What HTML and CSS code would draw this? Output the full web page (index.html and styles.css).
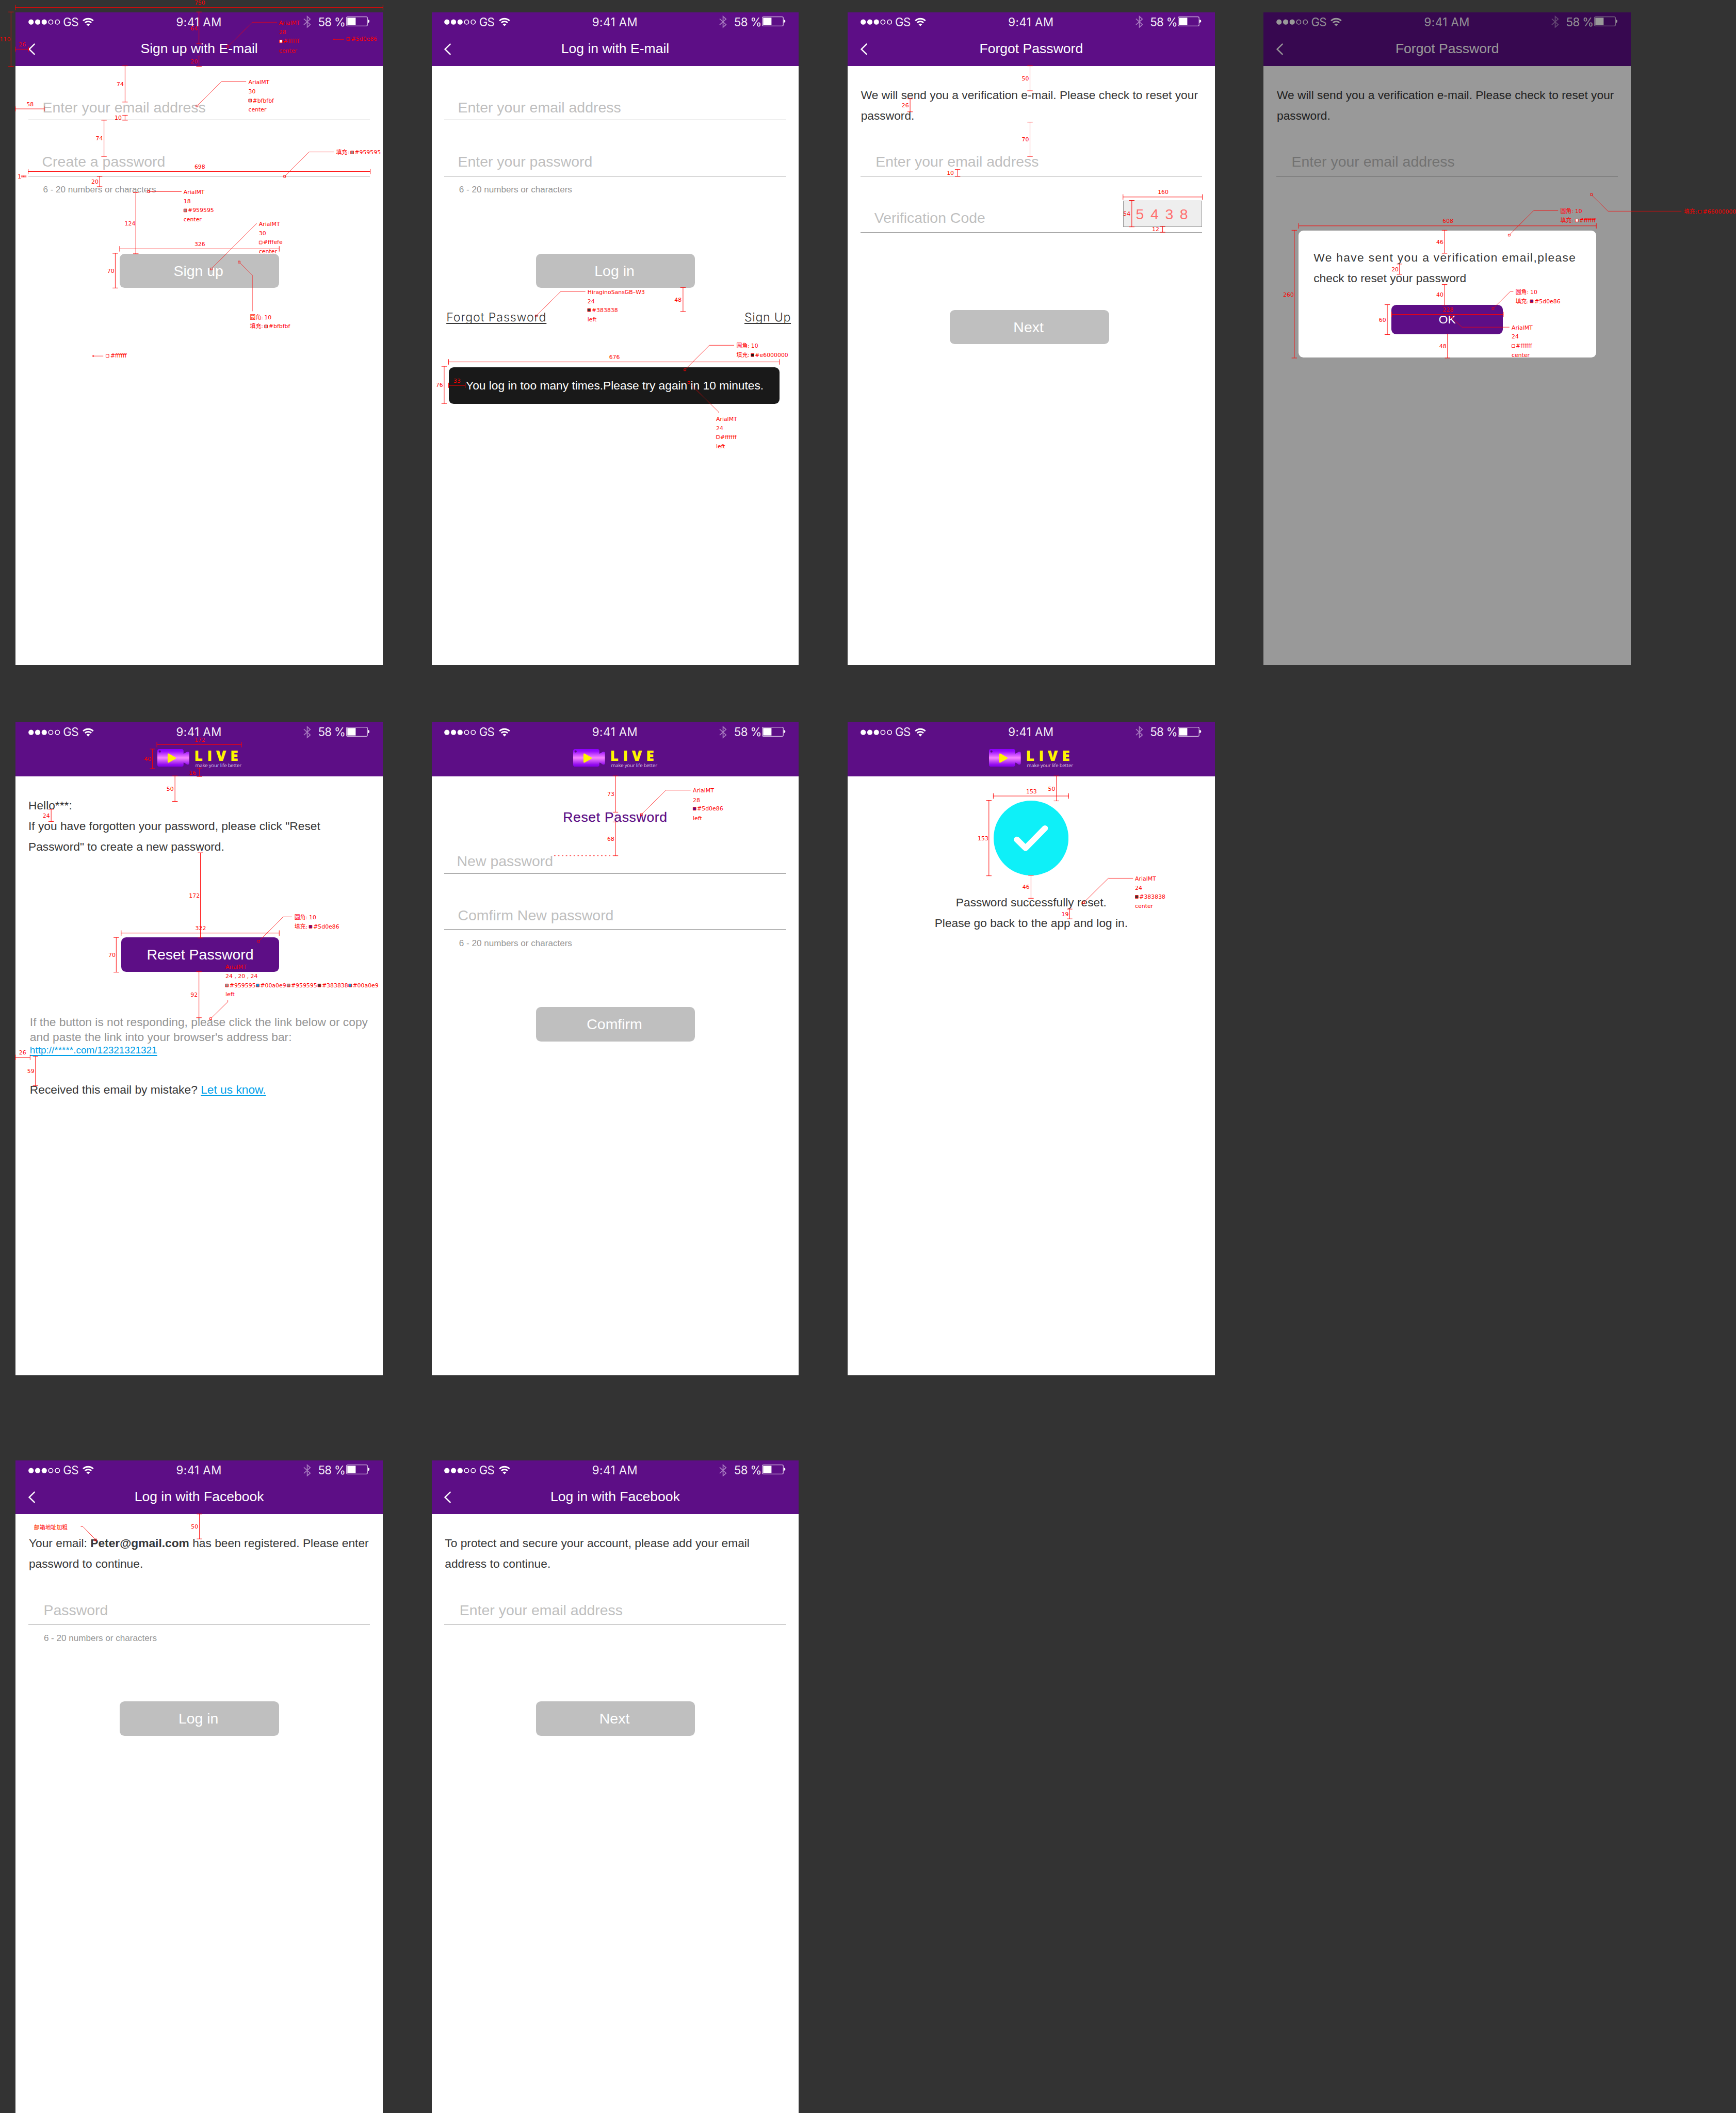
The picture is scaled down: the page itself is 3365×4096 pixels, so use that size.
FILE: index.html
```html
<!DOCTYPE html>
<html lang="en">
<head>
<meta charset="utf-8">
<title>Account screens</title>
<link rel="stylesheet" href="styles.css">
</head>
<body>
<svg class="sprite" aria-hidden="true">
  <symbol id="dots" viewBox="0 0 65 12"><g fill="#fff"><circle cx="5.5" cy="6" r="5.4"/><circle cx="19" cy="6" r="5.4"/><circle cx="32.4" cy="6" r="5.4"/></g><g fill="none" stroke="#fff" stroke-width="1.7"><circle cx="45.8" cy="6" r="4.4"/><circle cx="59.3" cy="6" r="4.4"/></g></symbol>
  <symbol id="wifi" viewBox="0 0 23 18"><path d="M1.2 6.6A14.6 14.6 0 0 1 21.8 6.6M5 10.6A9.2 9.2 0 0 1 18 10.6" fill="none" stroke="#fff" stroke-width="3"/><path d="M11.5 17.8L7.8 13.8A5.4 5.4 0 0 1 15.2 13.8Z" fill="#fff"/></symbol>
  <symbol id="bt" viewBox="0 0 16 26"><path d="M1 6.8L14 18.6L8 24V2L14 7.4L1 19.2" fill="none" stroke="#a679be" stroke-width="1.9"/></symbol>
  <symbol id="battery" viewBox="0 0 48 20"><rect x=".7" y=".7" width="42.8" height="18.6" rx="2.4" fill="none" stroke="#d9c6e4" stroke-width="1.3"/><rect x="2.4" y="2.4" width="17" height="15.2" fill="#fff"/><path d="M44.4 6.4Q48 7 48 9.6Q48 12 44.4 12.8Z" fill="#fff"/></symbol>
  <symbol id="back" viewBox="0 0 14 24"><path d="M13 1L1.8 12L13 23" fill="none" stroke="#fff" stroke-width="2.6"/></symbol>
  <linearGradient id="cam" x1="0" y1="0" x2="0" y2="36" gradientUnits="userSpaceOnUse"><stop offset="0" stop-color="#8c00ff"/><stop offset=".12" stop-color="#9608ff"/><stop offset=".5" stop-color="#f985ff"/><stop offset=".9" stop-color="#8f08ee"/><stop offset="1" stop-color="#8600ea"/></linearGradient>
  <symbol id="camera" viewBox="0 0 66 36"><path d="M4 0H49.5Q53.5 0 53.5 4V9.6Q56 9 58.5 7Q60.500 5.600 62.500 5.600Q65 5.600 65 9V28Q65 32 62.500 32Q60.500 32 58.500 30.300Q56 28 53.500 27.600V32Q53.500 36 49.500 36H4Q0 36 0 32V4Q0 0 4 0Z" fill="url(#cam)"/><circle cx="5" cy="5" r="2.2" fill="#5a0e80"/><path d="M21 10.500Q21.300 8.400 23.500 9.300L37.200 17.200Q39 18.600 37.200 20L23.500 27.800Q21.300 28.800 21 26.500Z" fill="#fff500"/></symbol>
</svg>

<main class="board">
  <div class="row">
    <section class="screen">
      <header class="bar">
        <div class="status"><div class="carrier"><svg class="i-dots"><use href="#dots"/></svg><span>GS</span><svg class="i-wifi"><use href="#wifi"/></svg></div><span class="time">9:41 AM</span><div class="power"><svg class="i-bt"><use href="#bt"/></svg><span>58 %</span><svg class="i-bat"><use href="#battery"/></svg></div></div>
        <div class="nav"><svg class="i-back"><use href="#back"/></svg><h1>Sign up with E-mail</h1></div>
      </header>
      <div class="content signup">
        <div class="field field--tight">Enter your email address</div>
        <div class="field field--create">Create a password</div>
        <p class="hint">6 - 20 numbers or characters</p>
        <div class="btn">Sign up</div>
      </div>
    </section>

    <section class="screen">
      <header class="bar">
        <div class="status"><div class="carrier"><svg class="i-dots"><use href="#dots"/></svg><span>GS</span><svg class="i-wifi"><use href="#wifi"/></svg></div><span class="time">9:41 AM</span><div class="power"><svg class="i-bt"><use href="#bt"/></svg><span>58 %</span><svg class="i-bat"><use href="#battery"/></svg></div></div>
        <div class="nav"><svg class="i-back"><use href="#back"/></svg><h1>Log in with E-mail</h1></div>
      </header>
      <div class="content login">
        <div class="field field--tight">Enter your email address</div>
        <div class="field field--pass">Enter your password</div>
        <p class="hint">6 - 20 numbers or characters</p>
        <div class="btn">Log in</div>
        <div class="links"><span class="forgot">Forgot Password</span><span class="join">Sign Up</span></div>
        <div class="toast">You log in too many times.Please try again in 10 minutes.</div>
      </div>
    </section>

    <section class="screen">
      <header class="bar">
        <div class="status"><div class="carrier"><svg class="i-dots"><use href="#dots"/></svg><span>GS</span><svg class="i-wifi"><use href="#wifi"/></svg></div><span class="time">9:41 AM</span><div class="power"><svg class="i-bt"><use href="#bt"/></svg><span>58 %</span><svg class="i-bat"><use href="#battery"/></svg></div></div>
        <div class="nav"><svg class="i-back"><use href="#back"/></svg><h1>Forgot Password</h1></div>
      </header>
      <div class="content forgot-screen">
        <p class="text">We will send you a verification e-mail. Please check to reset your<br>password.</p>
        <div class="field field--mail">Enter your email address</div>
        <div class="field field--code"><span>Verification Code</span><span class="captcha">5 4 3 8</span></div>
        <div class="btn">Next</div>
      </div>
    </section>

    <section class="screen">
      <header class="bar">
        <div class="status"><div class="carrier"><svg class="i-dots"><use href="#dots"/></svg><span>GS</span><svg class="i-wifi"><use href="#wifi"/></svg></div><span class="time">9:41 AM</span><div class="power"><svg class="i-bt"><use href="#bt"/></svg><span>58 %</span><svg class="i-bat"><use href="#battery"/></svg></div></div>
        <div class="nav"><svg class="i-back"><use href="#back"/></svg><h1>Forgot Password</h1></div>
      </header>
      <div class="content">
        <p class="text">We will send you a verification e-mail. Please check to reset your<br>password.</p>
        <div class="field field--mail">Enter your email address</div>
      </div>
      <div class="dim">
        <div class="modal">
          <p class="modal-text"><span class="wide">We have sent you a verification email,please</span><br>check to reset your password</p>
          <div class="ok">OK</div>
        </div>
      </div>
    </section>
  </div>

  <div class="row">
    <section class="screen">
      <header class="bar">
        <div class="status"><div class="carrier"><svg class="i-dots"><use href="#dots"/></svg><span>GS</span><svg class="i-wifi"><use href="#wifi"/></svg></div><span class="time">9:41 AM</span><div class="power"><svg class="i-bt"><use href="#bt"/></svg><span>58 %</span><svg class="i-bat"><use href="#battery"/></svg></div></div>
        <svg class="logo" viewBox="0 0 174 40"><use href="#camera" width="66" height="36" y="1"/><text class="logo-name" x="75.500 101.800 119.800 149" y="25.500">LIVE</text><text class="logo-tag" x="77.500" y="37.500" textLength="94.500">make your life better</text></svg>
      </header>
      <div class="content mail">
        <p class="text">Hello***:<br>If you have forgotten your password, please click "Reset<br>Password" to create a new password.</p>
        <div class="btn btn--purple">Reset Password</div>
        <p class="note">If the button is not responding, please click the link below or copy<br>and paste the link into your browser's address bar:</p>
        <p class="url"><span>http://*****.com/12321321321</span></p>
        <p class="mistake">Received this email by mistake? <span>Let us know.</span></p>
      </div>
    </section>

    <section class="screen">
      <header class="bar">
        <div class="status"><div class="carrier"><svg class="i-dots"><use href="#dots"/></svg><span>GS</span><svg class="i-wifi"><use href="#wifi"/></svg></div><span class="time">9:41 AM</span><div class="power"><svg class="i-bt"><use href="#bt"/></svg><span>58 %</span><svg class="i-bat"><use href="#battery"/></svg></div></div>
        <svg class="logo" viewBox="0 0 174 40"><use href="#camera" width="66" height="36" y="1"/><text class="logo-name" x="75.500 101.800 119.800 149" y="25.500">LIVE</text><text class="logo-tag" x="77.500" y="37.500" textLength="94.500">make your life better</text></svg>
      </header>
      <div class="content reset">
        <h2>Reset Password</h2>
        <div class="field field--tight">New password</div>
        <div class="field field--again">Comfirm New password</div>
        <p class="hint">6 - 20 numbers or characters</p>
        <div class="btn">Comfirm</div>
      </div>
    </section>

    <section class="screen">
      <header class="bar">
        <div class="status"><div class="carrier"><svg class="i-dots"><use href="#dots"/></svg><span>GS</span><svg class="i-wifi"><use href="#wifi"/></svg></div><span class="time">9:41 AM</span><div class="power"><svg class="i-bt"><use href="#bt"/></svg><span>58 %</span><svg class="i-bat"><use href="#battery"/></svg></div></div>
        <svg class="logo" viewBox="0 0 174 40"><use href="#camera" width="66" height="36" y="1"/><text class="logo-name" x="75.500 101.800 119.800 149" y="25.500">LIVE</text><text class="logo-tag" x="77.500" y="37.500" textLength="94.500">make your life better</text></svg>
      </header>
      <div class="content success">
        <svg class="tick" viewBox="0 0 153 153"><circle cx="76.500" cy="76.500" r="76.500" fill="#0ef0f8"/><path d="M47.400 79.500L65.200 97L105 56.500" fill="none" stroke="#fff" stroke-width="12" stroke-linecap="round" stroke-linejoin="round"/></svg>
        <p class="text">Password successfully reset.<br>Please go back to the app and log in.</p>
      </div>
    </section>
  </div>

  <div class="row">
    <section class="screen">
      <header class="bar">
        <div class="status"><div class="carrier"><svg class="i-dots"><use href="#dots"/></svg><span>GS</span><svg class="i-wifi"><use href="#wifi"/></svg></div><span class="time">9:41 AM</span><div class="power"><svg class="i-bt"><use href="#bt"/></svg><span>58 %</span><svg class="i-bat"><use href="#battery"/></svg></div></div>
        <div class="nav"><svg class="i-back"><use href="#back"/></svg><h1>Log in with Facebook</h1></div>
      </header>
      <div class="content facebook">
        <p class="text">Your email: <b>Peter@gmail.com</b> has been registered. Please enter<br>password to continue.</p>
        <div class="field field--mail">Password</div>
        <p class="hint">6 - 20 numbers or characters</p>
        <div class="btn">Log in</div>
      </div>
    </section>

    <section class="screen">
      <header class="bar">
        <div class="status"><div class="carrier"><svg class="i-dots"><use href="#dots"/></svg><span>GS</span><svg class="i-wifi"><use href="#wifi"/></svg></div><span class="time">9:41 AM</span><div class="power"><svg class="i-bt"><use href="#bt"/></svg><span>58 %</span><svg class="i-bat"><use href="#battery"/></svg></div></div>
        <div class="nav"><svg class="i-back"><use href="#back"/></svg><h1>Log in with Facebook</h1></div>
      </header>
      <div class="content facebook-mail">
        <p class="text">To protect and secure your account, please add your email<br>address to continue.</p>
        <div class="field field--mail">Enter your email address</div>
        <div class="btn">Next</div>
      </div>
    </section>
  </div>

  <!-- Measurements and style callouts laid over the screens -->
  <svg class="specs" viewBox="0 0 3547 4318">
    <!-- sign up -->
    <path d="M31.500 15.500H782.500M31.500 10V21M782.500 10V21M22.500 24.500V135.500M17 24.500H28M17 135.500H28M31.500 100.500H58.500M31.500 95.500V105.500M58.500 95.500V105.500M406.500 24.500V89.500M401 24.500H412M401 89.500H412M406.500 114.500V135.500M401 114.500H412M401 135.500H412M255.500 134.500V208.500M250 134.500H261M250 208.500H261M31.500 222.500H90.500M31.500 217.500V227.500M90.500 217.500V227.500M255.500 235.500V245.500M250 235.500H261M250 245.500H261M212.500 245.500V319.500M207 245.500H218M207 319.500H218M57.500 350.500H756.500M57.500 345.500V355.500M756.500 345.500V355.500M43 359.500H54M43 361.500H54M48.500 359V362M203.500 360.500V381.500M198 360.500H209M198 381.500H209M277.500 393.500V518.500M272 393.500H283M272 518.500H283M244.500 508.500H570.500M244.500 503V514M570.500 503V514M235.500 517.500V588.500M230 517.500H241M230 588.500H241"/>
    <path class="lead" d="M467.500 93.500L515.500 45.500H566M684 80.500H703M404.500 214.500L452.500 166.500H503M583.500 358.500L631.500 310.500H682M305.500 391.500H371M433.500 547.500L524.500 456.500M490.500 537.500L515.500 562V636M192 727.500H211"/>
    <path class="dot" d="M463.500 93.500h4v4h-4zM681.500 79.500h2v2h-2zM400.500 214.500h4v4h-4zM579.500 358.500h4v4h-4zM301.500 389.500h4v4h-4zM429.500 547.500h4v4h-4zM486.500 533.500h4v4h-4zM189.500 726.500h2v2h-2z"/>
    <g class="chips"><path fill="#fff" d="M571 81.500h6v6h-6zM529.500 492.500h6v6h-6zM216.500 724h6v6h-6z"/><path fill="#5d0e86" d="M708.500 76.500h6v6h-6z"/><path fill="#bfbfbf" d="M508 202.500h6v6h-6zM540.500 664h6v6h-6z"/><path fill="#959595" d="M716.500 308.500h6v6h-6zM375.500 427h6v6h-6z"/></g>
    <text x="397.300" y="9.300">750</text><text x="-.5" y="84.700">110</text><text x="38.200" y="95">26</text><text x="389.300" y="62">64</text><text x="389.300" y="129.700">20</text>
    <text x="570" y="51">ArialMT</text><text x="570" y="69.700">28</text><text x="578.600" y="88">#ffffff</text><text x="570" y="107">center</text><text x="717.300" y="83.300">#5d0e86</text>
    <text x="238.300" y="175.700">74</text><text x="507.500" y="172">ArialMT</text><text x="507.500" y="190.700">30</text><text x="516" y="209.300">#bfbfbf</text><text x="507.500" y="228">center</text>
    <text x="54" y="217">58</text><text x="234" y="244.800">10</text><text x="195.600" y="286.500">74</text><text x="397.300" y="344.800">698</text><text x="686.700" y="315.300">填充:</text><text x="724.500" y="315.300">#959595</text>
    <text x="36" y="364.700">1</text><text x="186.700" y="375.700">20</text><text x="375" y="396.700">ArialMT</text><text x="375" y="415.500">18</text><text x="383.700" y="433.700">#959595</text><text x="375" y="452.700">center</text>
    <text x="254.600" y="461">124</text><text x="529" y="462">ArialMT</text><text x="529" y="480.700">30</text><text x="537.500" y="498.700">#fffefe</text><text x="529" y="518">center</text><text x="397.300" y="503">326</text><text x="219" y="558">70</text>
    <text x="510.700" y="652">圆角:</text><text x="540" y="652">10</text><text x="510.700" y="670.700">填充:</text><text x="549" y="670.700">#bfbfbf</text><text x="225.500" y="731">#ffffff</text>

    <!-- log in -->
    <path d="M1395.500 587.500V636.500M1390 587.500H1401M1390 636.500H1401M916.500 739.500H1592.500M916.500 734V745M1592.500 734V745M907.500 748.500V824.500M902 748.500H913M902 824.500H913M916.500 787.500H950.500M916.500 782V792.500M950.500 782V792.500"/>
    <path class="lead" d="M1097.500 643.500L1146 595.500H1196M1401.500 753.500L1449.500 705.500H1500M1409.500 783.500L1468.500 842V844"/>
    <path class="dot" d="M1093.500 643.500h4v4h-4zM1397.500 753.500h4v4h-4zM1405.500 779.500h4v4h-4z"/>
    <g class="chips"><path fill="#383838" d="M1200.500 630.500h6v6h-6z"/><path fill="#191919" d="M1534.500 722.500h6v6h-6z"/><path fill="#fff" d="M1463.500 890h6v6h-6z"/></g>
    <text x="1200.300" y="600.700">HiraginoSansGB–W3</text><text x="1200.300" y="619.300">24</text><text x="1209" y="637.300">#383838</text><text x="1200.300" y="656.700">left</text><text x="1378" y="616.700">48</text>
    <text x="1504.700" y="710.700">圆角:</text><text x="1534.500" y="710.700">10</text><text x="1504.700" y="729.700">填充:</text><text x="1542.500" y="729.700">#e6000000</text><text x="1244.500" y="734">676</text><text x="890.400" y="790.700">76</text><text x="926.500" y="782">33</text>
    <text x="1463" y="860">ArialMT</text><text x="1463" y="878.700">24</text><text x="1471.500" y="896.700">#ffffff</text><text x="1463" y="915.700">left</text>

    <!-- forgot password -->
    <path d="M2104.500 134.500V185.500M2099 134.500H2110M2099 185.500H2110M1859.500 202V228.500M1854 202H1865M1854 228.500H1865M2104.500 249.500V319.500M2099 249.500H2110M2099 319.500H2110M1956.500 346.500V360.500M1951 346.500H1962M1951 360.500H1962M2294.500 402.500H2456.500M2294.500 397V408M2456.500 397V408M2312.500 409.500V463.500M2307 409.500H2318M2307 463.500H2318M2375.500 462.500V474.500M2370 462.500H2381M2370 474.500H2381"/>
    <text x="2087.600" y="164.400">50</text><text x="1842.400" y="219.500">26</text><text x="2087.600" y="288.400">70</text><text x="1934.400" y="357.700">10</text><text x="2365.500" y="396.700">160</text><text x="2295" y="440.400">54</text><text x="2353.700" y="472.500">12</text>

    <!-- verification dialog -->
    <path d="M2653.500 461.500H3261.500M2653.500 456V467M3261.500 456V467M2644.500 470.500V731M2639 470.500H2650M2639 731.500H2650M2951.500 470.500V517.500M2946 470.500H2957M2946 517.500H2957M2859.500 539.500V560.500M2854 539.500H2865M2854 560.500H2865M2951.500 581.500V623.500M2946 581.500H2957M2946 623.500H2957M2843.500 642.500H3071.500M2843.500 637V648M3071.500 637V648M2834.500 622.500V683.500M2829 622.500H2840M2829 683.500H2840M2957.500 682.500V731.500M2952 682.500H2963M2952 731.500H2963"/>
    <path class="lead" d="M3253 399.500L3285.500 431.500H3435.500M3085.500 478.500L3133.500 430.500H3183.500M3052.500 628.500L3086 595.500H3092M2967.500 650L2987 668.500H3084"/>
    <path class="dot" d="M3249.500 395.500h4v4h-4zM3081.500 478.500h4v4h-4zM3048.500 628.500h4v4h-4zM2963.500 646h4v4h-4z"/>
    <g class="chips"><path fill="#242424" d="M3470.500 429.500h6v6h-6z"/><path fill="#fff" d="M3218.500 447.500h6v6h-6zM3089 704h6v6h-6z"/><path fill="#5d0e86" d="M3126.500 612.500h6v6h-6z"/></g>
    <text x="3440.400" y="436.200">填充:</text><text x="3479" y="436.200">#66000000</text><text x="3188" y="435.300">圆角:</text><text x="3218" y="435.300">10</text><text x="3188" y="454.200">填充:</text><text x="3226.500" y="454.200">#ffffff</text>
    <text x="2947.500" y="455.600">608</text><text x="2621.500" y="605.900">260</text><text x="2934.500" y="498.700">46</text><text x="2843" y="554.500">20</text><text x="2934.500" y="606.400">40</text><text x="2947.500" y="636.400">228</text><text x="2817.400" y="657.700">60</text><text x="2940.700" y="711.500">48</text>
    <text x="3096.500" y="600.500">圆角:</text><text x="3126.500" y="600.500">10</text><text x="3096.500" y="619.400">填充:</text><text x="3135" y="619.400">#5d0e86</text>
    <text x="3088.400" y="673.700">ArialMT</text><text x="3088.400" y="692">24</text><text x="3097" y="710.500">#ffffff</text><text x="3088.400" y="729.500">center</text>

    <!-- reset e-mail -->
    <path d="M320.500 1521.500H493.500M320.500 1516V1527M493.500 1516V1527M311.500 1530.500V1570.500M306 1530.500H317M306 1570.500H317M407.500 1569.500V1586.500M402 1569.500H413M402 1586.500H413M357.500 1585.500V1637.500M352 1585.500H363M352 1637.500H363M104.500 1653.500V1678.500M99 1653.500H110M99 1678.500H110M409.500 1742.500V1916.500M404 1742.500H415M404 1916.500H415M247.500 1906.500H570.500M247.500 1901V1912M570.500 1901V1912M237.500 1915.500V1986.500M232 1915.500H243M232 1986.500H243M406.500 1985.500V2079.500M401 1985.500H412M401 2079.500H412M31.500 2160.500H61.500M31.500 2155V2166M61.500 2155V2166M72.500 2158.500V2218.500M67 2158.500H78M67 2218.500H78"/>
    <path class="lead" d="M530.500 1921.500L578.500 1873.500H596.500M465.500 2043.500V2047L432.500 2079.500"/>
    <path class="dot" d="M526.500 1921.500h4v4h-4zM428.500 2079.500h4v4h-4z"/>
    <g class="chips"><path fill="#5d0e86" d="M631.500 1890.500h6v6h-6z"/><path fill="#959595" d="M460.500 2010.500h6v6h-6zM586.500 2010.500h6v6h-6z"/><path fill="#00a0e9" d="M523.500 2010.500h6v6h-6zM712.500 2010.500h6v6h-6z"/><path fill="#383838" d="M649.500 2010.500h6v6h-6z"/></g>
    <text x="397.300" y="1515.700">172</text><text x="294.400" y="1554.700">40</text><text x="386.200" y="1582.700">16</text><text x="340.300" y="1615.700">50</text><text x="87.200" y="1671">24</text><text x="386.200" y="1833.700">172</text><text x="399" y="1900.700">322</text>
    <text x="601.500" y="1878.700">圆角:</text><text x="631.500" y="1878.700">10</text><text x="601.500" y="1897.700">填充:</text><text x="640" y="1897.700">#5d0e86</text><text x="221.400" y="1955.700">70</text>
    <text x="460.700" y="1979.700">ArialMT</text><text x="460.700" y="1999">24 , 20 , 24</text><text x="468.900" y="2017.700">#959595</text><text x="531.600" y="2017.700">#00a0e9</text><text x="594.400" y="2017.700">#959595</text><text x="657.700" y="2017.700">#383838</text><text x="720.400" y="2017.700">#00a0e9</text><text x="460.700" y="2035.700">left</text>
    <text x="389.300" y="2036.700">92</text><text x="38.700" y="2154.700">26</text><text x="55.600" y="2192.700">59</text>

    <!-- new password -->
    <path d="M1257.500 1585.500V1659.500M1252 1585.500H1263M1252 1659.500H1263M1257.500 1679.500V1748.500M1252 1679.500H1263M1252 1748.500H1263"/>
    <path stroke-dasharray="3 5" d="M1132 1748.500H1252"/>
    <path class="lead" d="M1312 1662.500L1360.500 1614.500H1411"/>
    <path class="dot" d="M1308.500 1662.500h4v4h-4z"/>
    <g class="chips"><path fill="#5d0e86" d="M1416 1649.500h6v6h-6z"/></g>
    <text x="1240.600" y="1626.500">73</text><text x="1240.600" y="1718.500">68</text><text x="1415.700" y="1619.400">ArialMT</text><text x="1415.700" y="1638.600">28</text><text x="1424.200" y="1656.400">#5d0e86</text><text x="1415.700" y="1675.600">left</text>

    <!-- success -->
    <path d="M2158.500 1585.500V1636.500M2153 1585.500H2164M2153 1636.500H2164M2029.500 1626.500H2183.500M2029.500 1621V1632M2183.500 1621V1632M2020.500 1635.500V1789.500M2015 1635.500H2026M2015 1789.500H2026M2106.500 1788.500V1835.500M2101 1788.500H2112M2101 1835.500H2112M2185.500 1857.500V1877.500M2180 1857.500H2191M2180 1877.500H2191"/>
    <path class="lead" d="M2216 1842.500L2264.500 1794.500H2315"/>
    <path class="dot" d="M2212 1842.500h4v4h-4z"/>
    <g class="chips"><path fill="#383838" d="M2319.500 1829.500h6v6h-6z"/></g>
    <text x="2141.300" y="1615.700">50</text><text x="2096.500" y="1621">153</text><text x="1997.600" y="1716.700">153</text><text x="2089" y="1816.700">46</text><text x="2168.700" y="1871.700">19</text>
    <text x="2319" y="1799.700">ArialMT</text><text x="2319" y="1818.300">24</text><text x="2327.700" y="1836.700">#383838</text><text x="2319" y="1855.700">center</text>

    <!-- facebook -->
    <path d="M407.500 3093.500V3144.500M402 3093.500H413M402 3144.500H413"/>
    <path class="lead" d="M165 3119.500H169.500L194 3144.500"/>
    <path class="dot" d="M193.500 3144.500h4v4h-4z"/>
    <text x="69.400" y="3125">邮箱地址加粗</text><text x="390.400" y="3123.700">50</text>
  </svg>
</main>
</body>
</html>
```
FILE: styles.css
```css
/* 1rem = 10 design pixels */
html { font-size: 9.487px; background: #333; }
* { box-sizing: border-box; margin: 0; padding: 0; }
body { background: #333; overflow: hidden; font-family: "Liberation Sans", Arial, sans-serif; }
svg { display: block; }
.sprite { position: absolute; width: 0; height: 0; }

.board { position: relative; width: 354.7rem; height: 431.8rem; padding: 2.5rem 3.2rem 0; overflow: hidden; }
.row { display: grid; grid-template-columns: repeat(4, 75rem); column-gap: 10rem; margin-bottom: 11.7rem; }
.row + .row { margin-bottom: 17.4rem; }
.row:nth-of-type(3) { margin-bottom: 0; }
.screen { position: relative; width: 75rem; height: 133.4rem; background: #fff; color: #383838; white-space: nowrap; }

/* header */
.bar { height: 11rem; background: #5d0e86; color: #fff; }
.status { display: grid; grid-template-columns: 1fr auto 1fr; align-items: center; height: 4rem; padding: 0 2.7rem 0 2.6rem; font: 2.35rem/4rem Inter, "Liberation Sans", sans-serif; color: #f3edf7; }
.carrier, .power { display: flex; align-items: center; }
.power { justify-content: flex-end; }
.carrier span { margin-left: .6rem; letter-spacing: -.08rem; }
.time { letter-spacing: .05rem; }
.power span { margin-right: .15rem; letter-spacing: -.07rem; }
.i-dots { width: 6.5rem; height: 1.2rem; position: relative; top: .05rem; }
.i-wifi { width: 2.3rem; height: 1.8rem; margin-left: .9rem; }
.i-bt { width: 1.6rem; height: 2.6rem; margin-right: 1.4rem; }
.i-bat { width: 4.8rem; height: 2rem; margin-top: -.2rem; }
.nav { display: grid; grid-template-columns: 2.6rem 1fr 2.6rem; align-items: center; height: 6.8rem; padding: 0 2.5rem; text-align: center; }
.nav h1 { padding-top: .2rem; font-size: 2.8rem; font-weight: 400; line-height: 4rem; }
.i-back { width: 1.4rem; height: 2.4rem; margin: .35rem 0 0 .1rem; }
.logo { width: 17.4rem; height: 4rem; margin: 1.4rem 0 0 28.9rem; overflow: visible; }
.logo-name { font: 800 30px "Open Sans", "Liberation Sans", sans-serif; fill: #fff500; }
.logo-tag { font: 10.2px "Open Sans", "Noto Sans", sans-serif; fill: #dcc4ea; }

/* shared form parts */
.content { padding: 0 2.6rem; }
.field { margin-top: 6.73rem; padding: 0 0 1.2rem 2.75rem; border-bottom: 1px solid #959595; font-size: 3rem; line-height: 3.4rem; color: #bfbfbf; }
.field--tight { padding-bottom: .85rem; }
.hint { margin-top: 1.75rem; padding-left: 3rem; font-size: 1.8rem; line-height: 2.2rem; color: #959595; }
.btn { width: 32.5rem; height: 7rem; margin: 0 0 0 18.7rem; padding-right: .4rem; border-radius: 1rem; background: #bfbfbf; color: #fff; font-size: 3rem; line-height: 7rem; text-align: center; }
.text { margin-left: .1rem; padding-top: 3.9rem; font-size: 2.4rem; line-height: 4.2rem; }
.text + .field { margin-top: 5.55rem; padding-left: 3.1rem; }

.signup .field { padding-left: 2.9rem; }
.signup .field--create { padding-left: 2.8rem; }
.signup .btn, .login .btn { margin-top: 11.85rem; }

.links { display: flex; justify-content: space-between; margin: 4.5rem -1rem 0 .4rem; font: 300 2.45rem/3rem Inter, "Liberation Sans", sans-serif; text-decoration: underline; text-decoration-thickness: .2rem; text-underline-offset: .35rem; text-decoration-skip-ink: none; }
.forgot { letter-spacing: .09rem; }
.join { letter-spacing: .07rem; }
.toast { width: 67.6rem; height: 7.5rem; margin: 8.7rem 0 0 .9rem; padding-left: 3.5rem; border-radius: 1rem; background: #191919; color: #fff; font-size: 2.4rem; line-height: 7.4rem; }

.forgot-screen .field--code { display: flex; justify-content: space-between; margin-top: 5rem; padding: 0 0 1.1rem 2.85rem; }
.field--code > span:first-child { padding-top: 1.7rem; }
.captcha { width: 16.1rem; height: 5.3rem; padding-left: 2.45rem; border: 1px solid #959595; background: #eee; color: #ff6e6e; letter-spacing: .25rem; line-height: 5.4rem; }
.forgot-screen .btn { width: 32.5rem; margin: 15.8rem 0 0 18.3rem; }

/* dialog over the dimmed screen */
.dim { position: absolute; inset: 0; padding: 44.6rem 7.1rem 0; background: rgba(0, 0, 0, .4); }
.modal { width: 60.8rem; height: 26rem; padding: 3.5rem 3.1rem 0; border-radius: 1rem; background: #fff; font-size: 2.4rem; }
.modal-text { line-height: 4.2rem; }
.wide { letter-spacing: .142rem; }
.ok { width: 22.8rem; height: 6rem; margin: 3.3rem auto 0; border-radius: 1rem; background: #5d0e86; color: #fff; line-height: 6rem; text-align: center; }

/* reset e-mail */
.mail .text { margin-left: 0; padding-top: 3.95rem; }
.mail .btn { width: 32.2rem; margin: 16.4rem 0 0 19rem; padding: 0; }
.btn--purple { background: #5d0e86; }
.note, .url, .mistake { margin-left: .3rem; font-size: 2.4rem; line-height: 3rem; }
.note { margin-top: 8.8rem; color: #959595; }
.url { margin-top: .15rem; font-size: 2rem; line-height: 2.4rem; color: #00a0e9; }
.mistake { margin-top: 5.3rem; }
.mistake span { color: #00a0e9; }
.url span, .mistake span { text-decoration: underline; text-decoration-thickness: .2rem; text-underline-offset: .35rem; text-decoration-skip-ink: none; }

/* new password */
.reset h2 { padding-top: 7.4rem; font-size: 2.8rem; font-weight: 400; line-height: 2.0rem; letter-spacing: .07rem; text-align: center; color: #5d0e86; -webkit-text-stroke: .03rem #5d0e86; }
.reset .field--tight { margin-top: 6.2rem; padding-left: 2.55rem; }
.reset .btn { margin-top: 11.85rem; }

/* success */
.success { padding-top: 5rem; text-align: center; }
.tick { width: 15.3rem; height: 15.3rem; margin: 0 auto; }
.success .text { margin-left: 0; padding-top: 3.5rem; }

.facebook .btn { margin-top: 11.75rem; }
.facebook .hint { padding-left: 3.15rem; }
.facebook-mail .btn { margin-top: 15.7rem; }

/* spec overlay */
.specs { position: absolute; left: 0; top: 0; width: 354.7rem; height: 431.8rem; fill: none; stroke: #f00; stroke-width: 1; }
.specs text { fill: #f00; stroke: none; font: 11.5px "DejaVu Sans", "Noto Sans CJK SC", sans-serif; }
.specs .lead { stroke-width: .85; }
```
